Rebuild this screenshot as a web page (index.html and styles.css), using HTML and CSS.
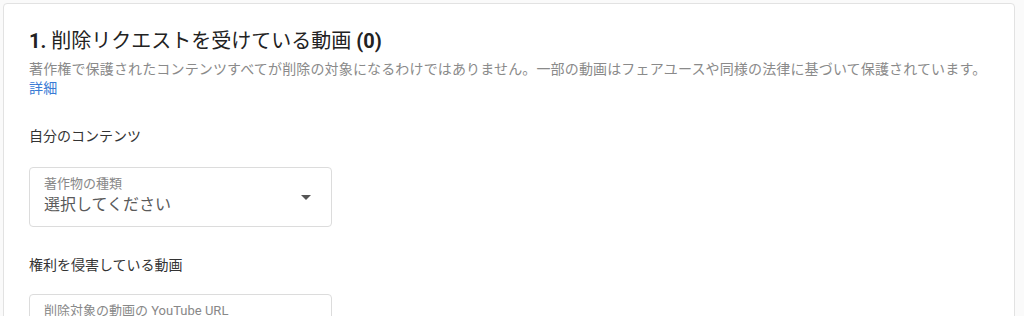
FILE: index.html
```html
<!DOCTYPE html>
<html lang="ja">
<head>
    <meta charset="UTF-8">
    <meta name="viewport" content="width=device-width, initial-scale=1.0">
    <title>削除リクエスト</title>
    <link rel="stylesheet" href="styles.css">
</head>
<body>
    <div class="card">
        <h2 class="title"><span class="num">1.</span> 削除リクエストを受けている動画 <span class="num">(0)</span></h2>
        <p class="desc">著作権で保護されたコンテンツすべてが削除の対象になるわけではありません。一部の動画はフェアユースや同様の法律に基づいて保護されています。<br><a href="#" class="link">詳細</a></p>

        <!-- My content -->
        <div class="section-label">自分のコンテンツ</div>
        <div class="field">
            <div class="field-text">
                <div class="field-label">著作物の種類</div>
                <div class="field-value">選択してください</div>
            </div>
            <span class="arrow"></span>
        </div>

        <!-- Infringing video -->
        <div class="section-label">権利を侵害している動画</div>
        <div class="field">
            <div class="field-text">
                <div class="field-label">削除対象の動画の YouTube URL</div>
            </div>
        </div>
    </div>
</body>
</html>
```

FILE: styles.css
```css
body, html {
    margin: 0;
    padding: 0;
    background-color: #fafafa;
    font-family: Roboto, "Noto Sans CJK JP", sans-serif;
}
body {
    padding: 3px 9px 0 3px;
    height: 313px;
    overflow: hidden;
}
.card {
    background-color: white;
    border: 1px solid #e2e2e2;
    border-radius: 4px;
    padding: 24px 10px 40px 25px;
    min-height: 400px;
}
.title {
    margin: 0;
    font-size: 20px;
    line-height: 26px;
    font-weight: 400;
    color: #222;
}
.title .num {
    font-weight: 700;
}
.desc {
    margin: 6px 0 0;
    font-size: 14px;
    line-height: 19px;
    letter-spacing: 0.15px;
    color: #8a8a8a;
}
.link {
    color: #3a7bd5;
    text-decoration: none;
}
.section-label {
    margin-top: 28px;
    font-size: 14px;
    line-height: 20px;
    color: #333;
}
.field {
    width: 303px;
    box-sizing: border-box;
    height: 60px;
    margin-top: 21px;
    border: 1px solid #dcdcdc;
    border-radius: 4px;
    padding: 7px 14px;
    display: flex;
    align-items: flex-start;
    justify-content: space-between;
}
.field + .section-label {
    margin-top: 28px;
}
.section-label + .field:last-child {
    margin-top: 19px;
}
.field-label {
    font-size: 13px;
    line-height: 17px;
    color: #888;
}
.field-value {
    font-size: 16px;
    line-height: 26px;
    color: #5a5a5a;
}
.arrow {
    align-self: center;
    width: 0;
    height: 0;
    margin-right: 6px;
    border-left: 5px solid transparent;
    border-right: 5px solid transparent;
    border-top: 5px solid #555;
}
```
